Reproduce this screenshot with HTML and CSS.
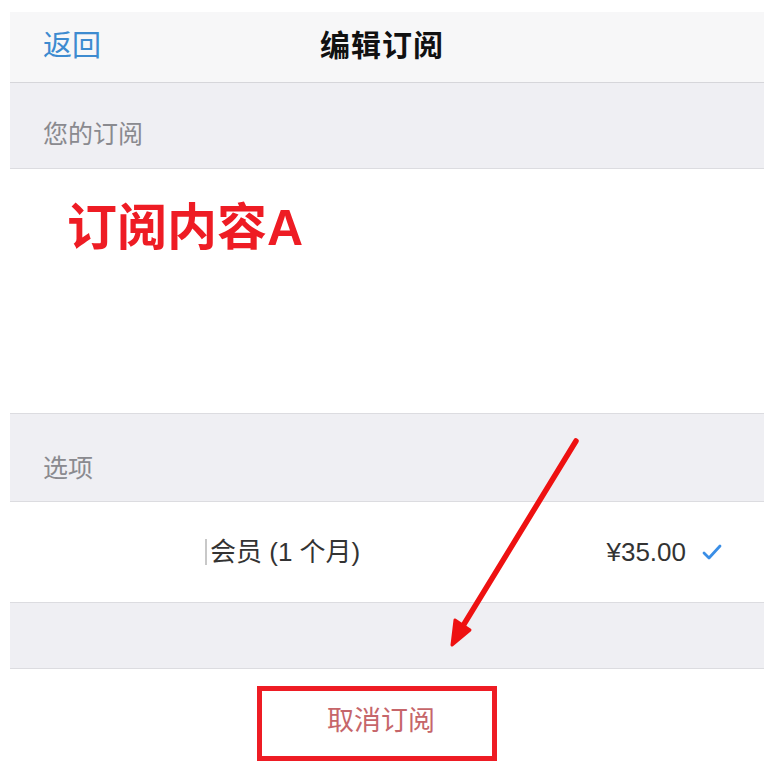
FILE: index.html
```html
<!DOCTYPE html>
<html lang="zh-CN">
<head>
  <meta charset="UTF-8" />
  <meta name="viewport" content="width=device-width, initial-scale=1" />
  <title>编辑订阅</title>
  <link rel="stylesheet" href="styles.css">
</head>
<body>
  <div class="screen">
    <div class="nav">
      <span class="back">返回</span>
      <h1>编辑订阅</h1>
    </div>

    <div class="section-header">您的订阅</div>
    <div class="content">
      <div class="content-title">订阅内容A</div>
    </div>

    <div class="section-header options">选项</div>
    <div class="option-row">
      <span class="option-name">会员 (1 个月)</span>
      <span class="option-price">¥35.00</span>
      <svg class="check" width="20" height="16" viewBox="0 0 20 16">
        <path d="M2 9 L7 14 L18 2" fill="none" stroke="#3a8ee6" stroke-width="2.8" stroke-linecap="round" stroke-linejoin="round"/>
      </svg>
    </div>

    <div class="section-gap"></div>

    <div class="cancel-area">
      <div class="cancel-box">取消订阅</div>
    </div>

    <svg class="arrow" width="764" height="781" viewBox="0 0 764 781">
      <line x1="576" y1="441" x2="458" y2="634" stroke="#ee1111" stroke-width="5.5" stroke-linecap="round"/>
      <polygon points="452,645 455,620 470,630" fill="#ee1111" stroke="#ee1111" stroke-width="3" stroke-linejoin="round"/>
    </svg>
  </div>
</body>
</html>
```

FILE: styles.css
```css
* {
  margin: 0;
  padding: 0;
  box-sizing: border-box;
}

body {
  font-family: "Liberation Sans", "Noto Sans CJK SC", sans-serif;
  background: #ffffff;
  color: #333333;
  width: 764px;
  height: 781px;
  overflow: hidden;
}

.screen {
  margin-left: 10px;
  padding-top: 12px;
}

.nav {
  position: relative;
  height: 71px;
  background: #f7f7f8;
  border-bottom: 1px solid #d6d6da;
  display: flex;
  align-items: center;
  padding-left: 33px;
  padding-bottom: 9px;
}

.back {
  font-size: 29px;
  color: #3d8bd0;
}

.nav h1 {
  position: absolute;
  left: 0;
  right: 0;
  top: 0;
  bottom: 9px;
  display: flex;
  align-items: center;
  justify-content: center;
  padding-right: 10px;
  font-size: 30px;
  font-weight: 700;
  letter-spacing: 1px;
  color: #111111;
  pointer-events: none;
}

.section-header {
  height: 86px;
  background: #efeff3;
  border-bottom: 1px solid #dcdce0;
  display: flex;
  align-items: center;
  padding-left: 33px;
  padding-top: 12px;
  font-size: 25px;
  color: #8a8a8f;
}

.section-header.options {
  height: 89px;
  border-top: 1px solid #dcdce0;
  padding-top: 16px;
}

.content {
  height: 244px;
  background: #ffffff;
  padding-left: 57px;
  padding-top: 29px;
}

.content-title {
  font-size: 50px;
  font-weight: 700;
  color: #ee1c24;
  line-height: 1.2;
}

.option-row {
  height: 101px;
  background: #ffffff;
  border-bottom: 1px solid #dcdce0;
  display: flex;
  align-items: center;
  padding-left: 195px;
  padding-right: 42px;
}

.option-name {
  font-size: 26px;
  color: #333333;
  border-left: 2px solid #c8c8c8;
  padding-left: 3px;
  line-height: 26px;
  flex: 1;
}

.option-price {
  font-size: 26px;
  color: #333333;
  margin-right: 16px;
}

.section-gap {
  height: 66px;
  background: #efeff3;
  border-bottom: 1px solid #dcdce0;
}

.cancel-area {
  display: flex;
  justify-content: center;
  padding-top: 17px;
  padding-right: 20px;
}

.cancel-box {
  width: 240px;
  height: 75px;
  border: 5px solid #ee1c24;
  display: flex;
  align-items: center;
  justify-content: center;
  padding-bottom: 10px;
  padding-left: 8px;
  font-size: 27px;
  color: #c6666a;
}

.arrow {
  position: absolute;
  left: 0;
  top: 0;
  pointer-events: none;
}
```
